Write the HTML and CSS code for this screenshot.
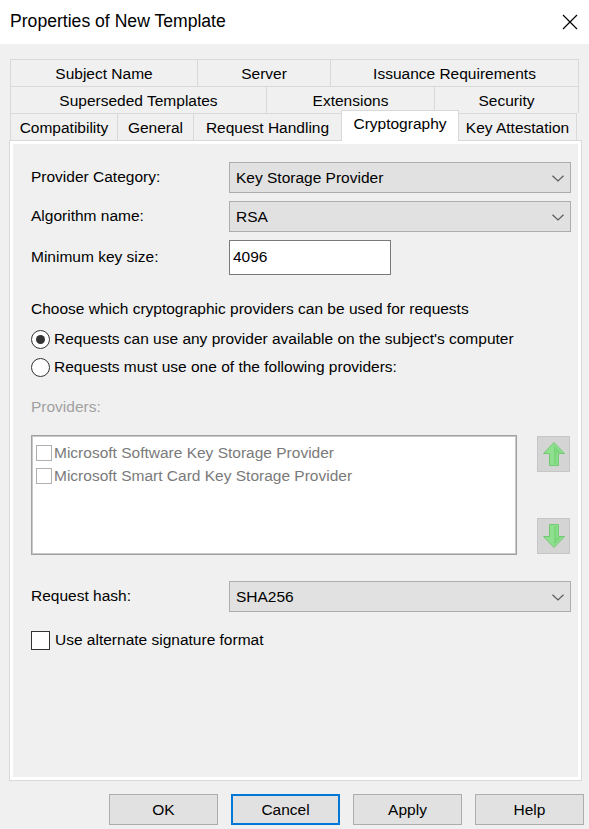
FILE: index.html
```html
<!DOCTYPE html>
<html>
<head>
<meta charset="utf-8">
<link rel="stylesheet" href="styles.css">
</head>
<body>
<div class="window">
  <div class="titlebar">
    <span class="title">Properties of New Template</span>
    <svg class="close" width="16" height="16" viewBox="0 0 16 16"><path d="M1 1L15 15M15 1L1 15" stroke="#000" stroke-width="1.2" fill="none"/></svg>
  </div>
  <div class="body">
    <div class="tabs">
      <div class="tabrow">
        <div class="tab t187">Subject Name</div>
        <div class="tab t133">Server</div>
        <div class="tab t249 last">Issuance Requirements</div>
      </div>
      <div class="tabrow">
        <div class="tab t256">Superseded Templates</div>
        <div class="tab t168">Extensions</div>
        <div class="tab t145 last">Security</div>
      </div>
      <div class="tabrow">
        <div class="tab t107">Compatibility</div>
        <div class="tab t76">General</div>
        <div class="tab t148">Request Handling</div>
        <div class="tab t118 active">Cryptography</div>
        <div class="tab t118 last">Key Attestation</div>
      </div>
    </div>
    <div class="panel">
      <div class="formgrid">
        <div class="label">Provider Category:</div>
        <div class="combo"><span>Key Storage Provider</span><svg class="chev" width="12" height="7" viewBox="0 0 12 7"><path d="M0.5 0.8L6 6L11.5 0.8" stroke="#5a5a5a" stroke-width="1.2" fill="none"/></svg></div>
        <div class="label">Algorithm name:</div>
        <div class="combo"><span>RSA</span><svg class="chev" width="12" height="7" viewBox="0 0 12 7"><path d="M0.5 0.8L6 6L11.5 0.8" stroke="#5a5a5a" stroke-width="1.2" fill="none"/></svg></div>
        <div class="label">Minimum key size:</div>
        <div class="textbox">4096</div>
      </div>
      <div class="choose">Choose which cryptographic providers can be used for requests</div>
      <div class="radio-row"><span class="radio checked"></span><span>Requests can use any provider available on the subject's computer</span></div>
      <div class="radio-row"><span class="radio"></span><span>Requests must use one of the following providers:</span></div>
      <div class="providers-label">Providers:</div>
      <div class="providers">
        <div class="listbox">
          <div class="item"><span class="cb-small"></span><span>Microsoft Software Key Storage Provider</span></div>
          <div class="item"><span class="cb-small"></span><span>Microsoft Smart Card Key Storage Provider</span></div>
        </div>
        <div class="arrows">
          <div class="arrowbtn"><svg width="24" height="26" viewBox="0 0 24 26"><path d="M12 1.5L22.5 12.5H16.5V24.5H7.5V12.5H1.5Z" fill="#8ee08e" stroke="#74c874" stroke-width="1"/><path d="M12 4L19 11.5H14.5V23H12Z" fill="#6fcf6f" opacity="0.6"/></svg></div>
          <div class="arrowbtn"><svg width="24" height="26" viewBox="0 0 24 26"><path d="M12 24.5L22.5 13.5H16.5V1.5H7.5V13.5H1.5Z" fill="#8ee08e" stroke="#74c874" stroke-width="1"/><path d="M12 22L19 14.5H14.5V3H12Z" fill="#6fcf6f" opacity="0.6"/></svg></div>
        </div>
      </div>
      <div class="formgrid hash">
        <div class="label">Request hash:</div>
        <div class="combo"><span>SHA256</span><svg class="chev" width="12" height="7" viewBox="0 0 12 7"><path d="M0.5 0.8L6 6L11.5 0.8" stroke="#5a5a5a" stroke-width="1.2" fill="none"/></svg></div>
      </div>
      <div class="check-row"><span class="checkbox"></span><span>Use alternate signature format</span></div>
    </div>
    <div class="buttons">
      <div class="btn">OK</div>
      <div class="btn default">Cancel</div>
      <div class="btn">Apply</div>
      <div class="btn">Help</div>
    </div>
  </div>
</div>
</body>
</html>
```

FILE: styles.css
```css
* { box-sizing: border-box; }
html, body { margin: 0; padding: 0; }
body {
  width: 589px;
  height: 829px;
  overflow: hidden;
  font-family: "Liberation Sans", Arial, sans-serif;
  font-size: 15.5px;
  color: #000;
  background: #f0f0f0;
}
.window { width: 589px; height: 829px; display: flex; flex-direction: column; }
.titlebar {
  height: 44px;
  background: #fff;
  display: flex;
  align-items: center;
  justify-content: space-between;
  padding: 0 10px 2px 10px;
}
.title { font-size: 17.6px; }
.close { margin-right: 1px; margin-top: 1px; }
.body { flex: 1; display: flex; flex-direction: column; }
.tabs { margin-top: 15px; padding-left: 10px; display: flex; flex-direction: column; }
.tabrow { display: flex; height: 27px; }
.tab {
  height: 27px;
  border-top: 1px solid #d9d9d9;
  border-left: 1px solid #d9d9d9;
  display: flex;
  align-items: center;
  justify-content: center;
  padding-top: 1px;
  white-space: nowrap;
  background: #f0f0f0;
}
.tab.last { border-right: 1px solid #d9d9d9; }
.tab.active {
  background: #fff;
  height: 31px;
  margin-top: -3px;
  border-right: 1px solid #d9d9d9;
  padding-top: 0;
  padding-bottom: 4px;
  position: relative;
  z-index: 2;
}
.tab.active + .tab { border-left: none; }
.t187 { width: 187px; }
.t133 { width: 133px; }
.t249 { width: 249px; }
.t256 { width: 256px; }
.t168 { width: 168px; }
.t145 { width: 145px; }
.t107 { width: 107px; }
.t76 { width: 76px; }
.t148 { width: 148px; }
.t118 { width: 118px; }
.panel {
  margin-left: 9px;
  width: 573px;
  height: 641px;
  border: 1px solid #d9d9d9;
  box-shadow: inset 0 0 0 3px #fff;
  background: #f0f0f0;
  padding: 21px 10px 0 21px;
  position: relative;
  z-index: 1;
}
.formgrid {
  display: grid;
  grid-template-columns: 198px 1fr;
  grid-template-rows: 31px 31px 35px;
  row-gap: 8px;
  align-items: center;
}
.formgrid .label { align-self: center; padding-bottom: 2px; }
.formgrid .textbox { margin-top: -1px; }
.combo {
  height: 31px;
  background: #e1e1e1;
  border: 1px solid #adadad;
  display: flex;
  align-items: center;
  justify-content: space-between;
  padding: 0 6px 0 6px;
}
.chev { margin-top: 1px; }
.textbox {
  width: 162px;
  height: 35px;
  background: #fff;
  border: 1px solid #7a7a7a;
  display: flex;
  align-items: center;
  padding-left: 3px;
}
.choose { margin-top: 23px; height: 22px; line-height: 22px; }
.radio-row { display: flex; align-items: center; height: 28px; gap: 4px; }
.choose + .radio-row { margin-top: 5px; }
.radio {
  width: 19px;
  height: 19px;
  border: 1px solid #333;
  border-radius: 50%;
  background: #fff;
  display: flex;
  align-items: center;
  justify-content: center;
  flex: none;
}
.radio.checked::after {
  content: "";
  width: 9px;
  height: 9px;
  border-radius: 50%;
  background: #333;
}
.providers-label { margin-top: 15px; height: 22px; line-height: 22px; color: #a0a0a0; }
.providers { margin-top: 17px; display: flex; gap: 20px; }
.listbox {
  width: 486px;
  height: 120px;
  background: #fff;
  border: 1px solid #a0a0a0;
  box-shadow: inset 0 0 0 1px #c8c8c8;
  padding: 5px 0 0 4px;
  color: #7a7a7a;
}
.item { display: flex; align-items: center; height: 23px; gap: 2px; }
.cb-small {
  width: 16px;
  height: 16px;
  border: 1px solid #b0b0b0;
  background: #fff;
  flex: none;
}
.arrows { display: flex; flex-direction: column; justify-content: space-between; height: 120px; padding: 1px 0 1px 0; }
.arrowbtn {
  width: 33px;
  height: 36px;
  background: #d4d4d4;
  border: 1px solid #c6c6c6;
  display: flex;
  align-items: center;
  justify-content: center;
}
.hash { grid-template-rows: 31px; margin-top: 26px; }
.check-row { display: flex; align-items: center; gap: 5px; margin-top: 18px; height: 20px; }
.checkbox {
  width: 19px;
  height: 19px;
  border: 1px solid #333;
  background: #fff;
  flex: none;
}
.buttons {
  display: flex;
  justify-content: flex-end;
  gap: 13px;
  padding-right: 5px;
  margin-top: 13px;
}
.btn {
  width: 109px;
  height: 31px;
  background: #e1e1e1;
  border: 1px solid #adadad;
  display: flex;
  align-items: center;
  justify-content: center;
}
.btn.default { border: 2px solid #0078d7; }
```
